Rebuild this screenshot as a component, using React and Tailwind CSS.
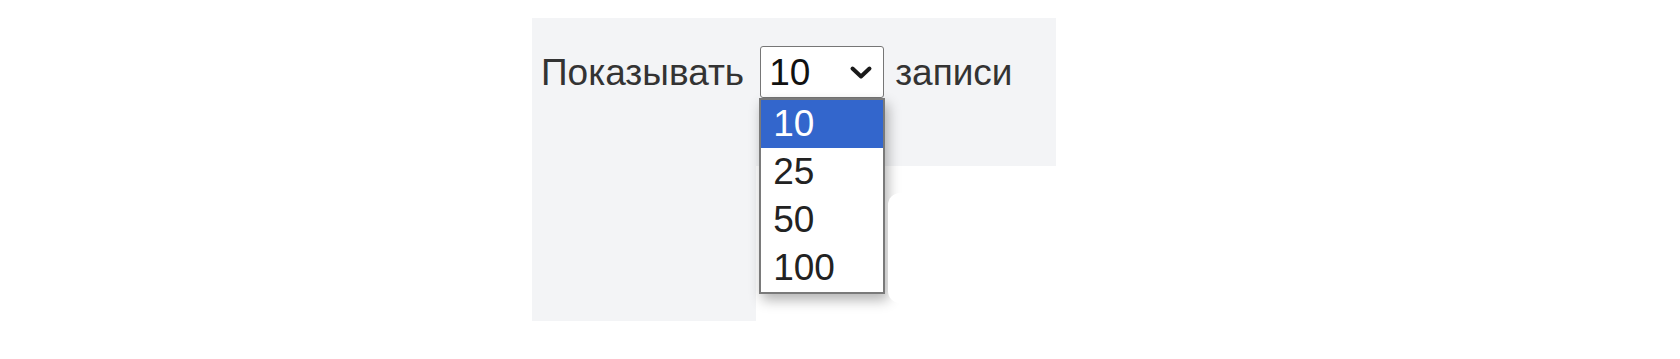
export default function App() {
  const options = ["10", "25", "50", "100"];
  return (
    <div className="w-[1680px] h-[359px] bg-white pt-[18px] overflow-hidden" style={{ fontFamily: '"Liberation Sans", Arial, sans-serif' }}>
      <div className="ml-[532px] w-[524px]">
        <div className="bg-gray-100 h-[148px] pt-[28px] pl-[9px]">
          <div className="flex items-center h-[52px] text-[37px] text-[#333]">
            <span className="leading-none">Показывать</span>
            <div className="relative ml-[16px] z-10">
              <div className="flex items-center justify-between w-[124px] h-[52px] bg-white border border-[#767676] rounded-[3px] pl-[8px] pr-[10px] text-[#111]">
                <span className="leading-none">10</span>
                <svg width="24" height="16" viewBox="0 0 24 16" className="mt-[2px]">
                  <path d="M3.5 3.5 L12 11.5 L20.5 3.5" fill="none" stroke="#1a1a1a" strokeWidth="4" strokeLinecap="round" strokeLinejoin="round" />
                </svg>
              </div>
              <div className="absolute left-[-1px] top-[52px] w-[126px] bg-white border-2 border-[#7a7a7a] shadow-[3px_6px_12px_rgba(0,0,0,0.3)]">
                {options.map((o, i) => (
                  <div
                    key={o}
                    className={
                      i === 0
                        ? "h-[48px] flex items-center pl-[12px] pb-[2px] bg-[#3366cc] text-white"
                        : "h-[48px] flex items-center pl-[12px] pb-[2px] text-[#222]"
                    }
                  >
                    <span className="leading-none">{o}</span>
                  </div>
                ))}
              </div>
            </div>
            <span className="leading-none ml-[11px]">записи</span>
          </div>
        </div>
        <div className="flex h-[155px]">
          <div className="w-[224px] bg-gray-100"></div>
          <div className="flex-1 bg-white pl-[132px] pt-[27px]">
            <div className="relative z-20 bg-white rounded-l-[12px] h-[110px] w-full"></div>
          </div>
        </div>
      </div>
    </div>
  );
}
